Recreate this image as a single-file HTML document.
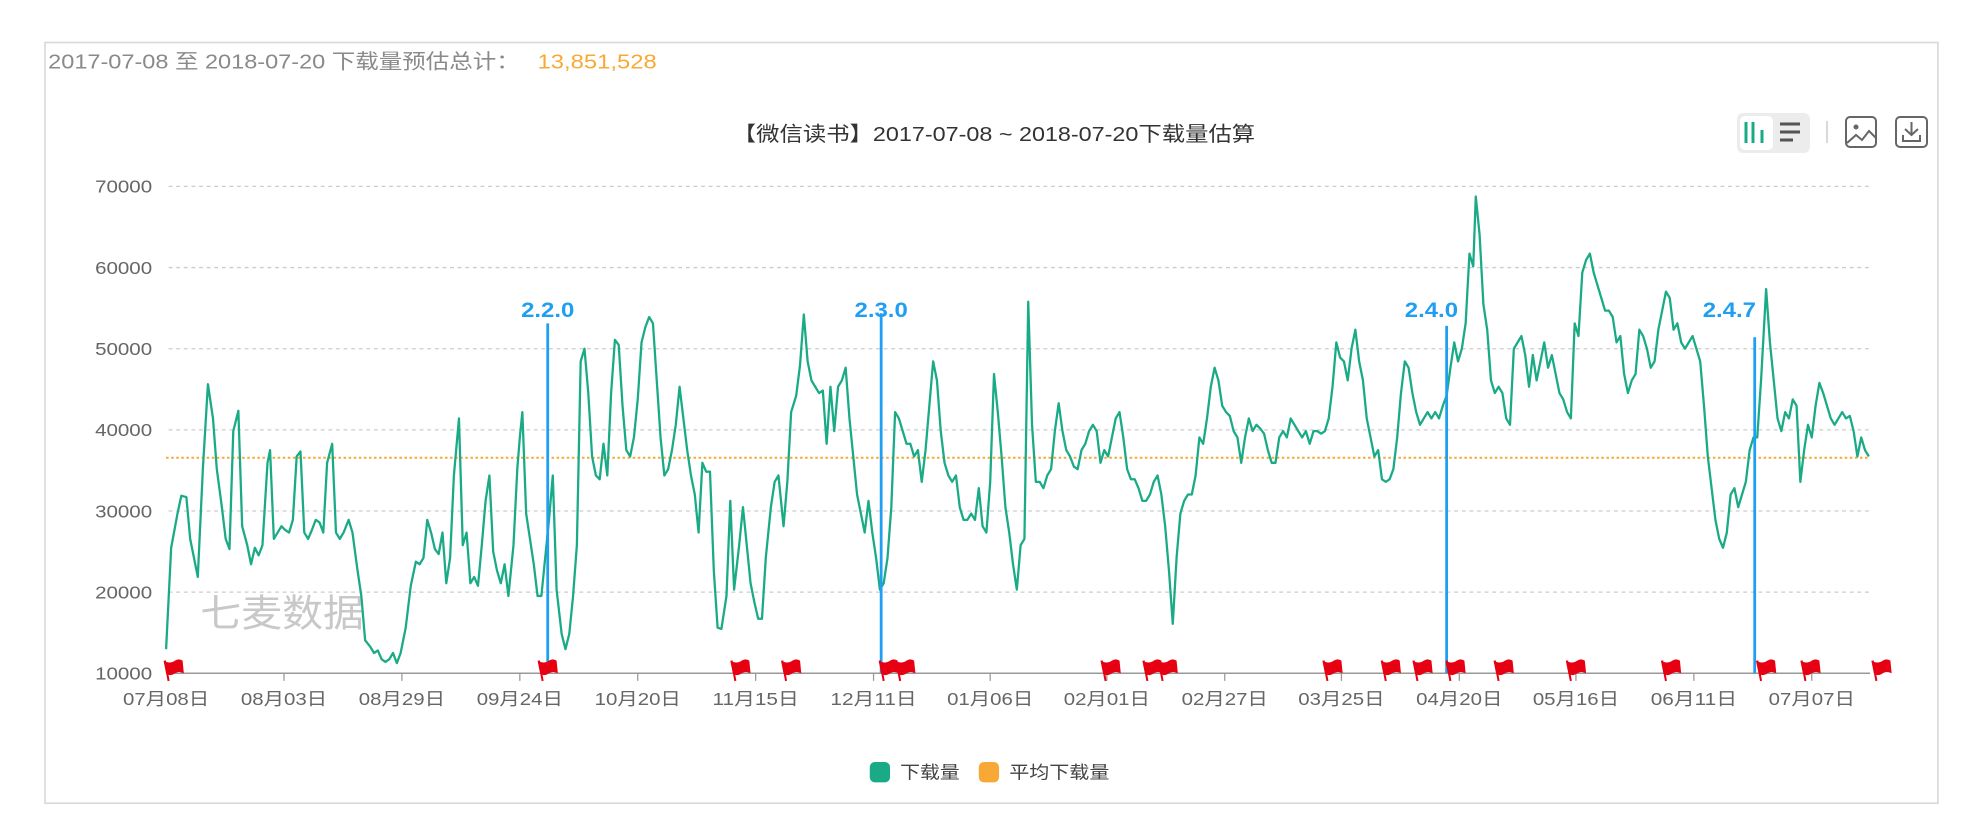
<!DOCTYPE html>
<html><head><meta charset="utf-8"><style>
html,body{margin:0;padding:0;background:#fff;}
body{width:1988px;height:828px;position:relative;overflow:hidden;font-family:"Liberation Sans","Noto Sans CJK SC",sans-serif;}
svg{position:absolute;left:0;top:0;}
</style></head><body>
<svg width="1988" height="828" viewBox="0 0 1568 653" xmlns="http://www.w3.org/2000/svg" font-family="Liberation Sans, Noto Sans CJK SC, sans-serif">
<rect x="35.5" y="33.5" width="1493" height="600" fill="#fff" stroke="#d9d9d9" stroke-width="1.3"/>
<text x="38" y="54" font-size="16" fill="#8a8a8a" textLength="372" lengthAdjust="spacingAndGlyphs">2017-07-08 至 2018-07-20 下载量预估总计：</text>
<text x="424" y="54" font-size="16" fill="#f8a935" textLength="94" lengthAdjust="spacingAndGlyphs">13,851,528</text>
<text x="578" y="111" font-size="16" fill="#333" textLength="412" lengthAdjust="spacingAndGlyphs">【微信读书】2017-07-08 ~ 2018-07-20下载量估算</text>
<g stroke="#ccc" stroke-width="1" stroke-dasharray="3,3">
<line x1="133" y1="147" x2="1475" y2="147"/><line x1="133" y1="211" x2="1475" y2="211"/>
<line x1="133" y1="275" x2="1475" y2="275"/><line x1="133" y1="339" x2="1475" y2="339"/>
<line x1="133" y1="403" x2="1475" y2="403"/><line x1="133" y1="467" x2="1475" y2="467"/>
</g>
<line x1="131" y1="531" x2="1475" y2="531" stroke="#999" stroke-width="1.2"/>
<g font-size="14" fill="#666">
<text x="75" y="152" textLength="45" lengthAdjust="spacingAndGlyphs">70000</text><text x="75" y="216" textLength="45" lengthAdjust="spacingAndGlyphs">60000</text><text x="75" y="280" textLength="45" lengthAdjust="spacingAndGlyphs">50000</text>
<text x="75" y="344" textLength="45" lengthAdjust="spacingAndGlyphs">40000</text><text x="75" y="408" textLength="45" lengthAdjust="spacingAndGlyphs">30000</text><text x="75" y="472" textLength="45" lengthAdjust="spacingAndGlyphs">20000</text><text x="75" y="536" textLength="45" lengthAdjust="spacingAndGlyphs">10000</text>
</g>
<g stroke="#999" stroke-width="1">
<line x1="224" y1="531" x2="224" y2="537"/><line x1="317" y1="531" x2="317" y2="537"/><line x1="410" y1="531" x2="410" y2="537"/><line x1="503" y1="531" x2="503" y2="537"/><line x1="596" y1="531" x2="596" y2="537"/><line x1="689" y1="531" x2="689" y2="537"/><line x1="781" y1="531" x2="781" y2="537"/><line x1="873" y1="531" x2="873" y2="537"/><line x1="966" y1="531" x2="966" y2="537"/><line x1="1058" y1="531" x2="1058" y2="537"/><line x1="1151" y1="531" x2="1151" y2="537"/><line x1="1243" y1="531" x2="1243" y2="537"/><line x1="1336" y1="531" x2="1336" y2="537"/><line x1="1429" y1="531" x2="1429" y2="537"/>
</g>
<g font-size="14" fill="#666">
<text x="97" y="556" textLength="68" lengthAdjust="spacingAndGlyphs">07月08日</text><text x="190" y="556" textLength="68" lengthAdjust="spacingAndGlyphs">08月03日</text><text x="283" y="556" textLength="68" lengthAdjust="spacingAndGlyphs">08月29日</text><text x="376" y="556" textLength="68" lengthAdjust="spacingAndGlyphs">09月24日</text><text x="469" y="556" textLength="68" lengthAdjust="spacingAndGlyphs">10月20日</text><text x="562" y="556" textLength="68" lengthAdjust="spacingAndGlyphs">11月15日</text><text x="655" y="556" textLength="68" lengthAdjust="spacingAndGlyphs">12月11日</text><text x="747" y="556" textLength="68" lengthAdjust="spacingAndGlyphs">01月06日</text><text x="839" y="556" textLength="68" lengthAdjust="spacingAndGlyphs">02月01日</text><text x="932" y="556" textLength="68" lengthAdjust="spacingAndGlyphs">02月27日</text><text x="1024" y="556" textLength="68" lengthAdjust="spacingAndGlyphs">03月25日</text><text x="1117" y="556" textLength="68" lengthAdjust="spacingAndGlyphs">04月20日</text><text x="1209" y="556" textLength="68" lengthAdjust="spacingAndGlyphs">05月16日</text><text x="1302" y="556" textLength="68" lengthAdjust="spacingAndGlyphs">06月11日</text><text x="1395" y="556" textLength="68" lengthAdjust="spacingAndGlyphs">07月07日</text>
</g>
<text x="158" y="494" font-size="30" fill="#c8c8c8" textLength="129" lengthAdjust="spacingAndGlyphs">七麦数据</text>
<line x1="131" y1="361" x2="1475" y2="361" stroke="#f8a935" stroke-width="1.5" stroke-dasharray="2,2"/>
<polyline fill="none" stroke="#1aab86" stroke-width="1.8" stroke-linejoin="round" points="131,512 135,432 140,405 143,391 147,392 150,425 153,440 156,455 160,370 164,303 168,330 171,370 175,400 178,425 181,433 184,340 188,324 191,415 195,430 198,445 201,432 204,438 207,430 211,365 213,355 216,425 219,420 222,415 225,418 228,420 231,410 234,360 237,356 240,420 243,425 246,418 249,410 252,412 255,420 258,365 262,350 265,420 268,425 271,420 275,410 278,420 282,450 285,470 288,505 292,510 295,515 298,513 301,520 304,522 307,520 310,515 313,523 316,515 320,495 324,462 328,443 331,445 334,440 337,410 340,420 343,433 346,437 349,420 352,460 355,440 358,375 362,330 365,430 368,420 371,460 374,455 377,462 380,430 383,395 386,375 389,435 392,450 395,460 398,445 401,470 405,430 408,370 410,345 412,325 415,405 418,425 421,445 424,470 427,470 430,440 433,410 436,375 439,465 443,500 446,512 449,500 452,470 455,430 458,285 461,275 464,310 467,360 470,375 473,378 476,350 479,375 482,310 485,268 488,272 491,320 494,355 497,360 500,345 503,315 506,270 509,258 512,250 515,255 518,300 521,345 524,375 527,370 530,355 533,335 536,305 539,330 542,355 545,375 548,390 551,420 554,365 557,372 560,372 563,450 566,495 569,496 573,470 576,395 579,465 583,430 586,400 589,430 592,460 595,475 598,488 601,488 604,440 608,400 611,380 614,375 618,415 621,380 624,325 628,312 631,288 634,248 637,285 640,300 643,305 646,310 649,308 652,350 655,305 658,340 661,305 664,300 667,290 670,330 673,360 676,390 679,405 682,420 685,395 688,420 691,440 694,465 697,460 700,440 703,400 706,325 709,330 712,340 715,350 718,350 721,360 724,355 727,380 730,355 733,320 736,285 739,300 742,340 745,365 748,375 751,380 754,375 757,400 760,410 763,410 766,405 769,410 772,385 775,415 778,420 781,380 784,295 787,325 790,360 793,400 796,420 799,445 802,465 805,430 808,425 811,238 814,335 817,380 820,380 823,385 826,375 829,370 832,340 835,318 838,340 841,355 844,360 847,368 850,370 853,355 856,350 859,340 862,335 865,340 868,365 871,355 874,360 877,345 880,330 883,325 886,345 889,370 892,378 895,378 898,385 901,395 904,395 907,390 910,380 913,375 916,390 919,415 922,450 925,492 928,440 931,405 934,395 937,390 940,390 943,375 946,345 949,350 952,330 955,305 958,290 961,300 964,320 967,325 970,328 973,340 976,345 979,365 982,345 985,330 988,340 991,335 994,338 997,342 1000,355 1003,365 1006,365 1009,345 1012,340 1015,345 1018,330 1021,335 1024,340 1027,345 1030,340 1033,350 1036,340 1039,340 1042,342 1045,340 1048,330 1051,305 1054,270 1057,282 1060,285 1063,300 1066,275 1069,260 1072,285 1075,300 1078,330 1081,345 1084,360 1087,355 1090,378 1093,380 1096,378 1099,370 1102,345 1105,310 1108,285 1111,290 1114,310 1117,325 1120,335 1123,330 1126,325 1129,330 1132,325 1135,330 1138,320 1141,312 1144,290 1147,270 1150,285 1153,275 1156,255 1159,200 1162,210 1164,155 1167,185 1170,240 1173,260 1176,300 1179,310 1182,305 1185,310 1188,330 1191,335 1194,275 1197,270 1200,265 1203,280 1206,305 1209,280 1212,300 1215,285 1218,270 1221,290 1224,280 1227,295 1230,310 1233,315 1236,325 1239,330 1242,255 1245,265 1248,215 1251,205 1254,200 1257,215 1260,225 1263,235 1266,245 1269,245 1272,250 1275,270 1278,265 1281,295 1284,310 1287,300 1290,295 1293,260 1296,265 1299,275 1302,290 1305,285 1308,260 1311,245 1314,230 1317,235 1320,260 1323,255 1326,270 1329,275 1332,270 1335,265 1338,275 1341,285 1344,320 1347,360 1350,385 1353,410 1356,425 1359,432 1362,420 1365,390 1368,385 1371,400 1374,390 1377,380 1380,355 1383,345 1386,345 1389,300 1393,228 1396,270 1399,300 1402,330 1405,340 1408,325 1411,330 1414,315 1417,320 1420,380 1423,355 1426,335 1429,345 1432,320 1435,302 1438,310 1441,320 1444,330 1447,335 1450,330 1453,325 1456,330 1459,328 1462,340 1465,360 1468,345 1471,355 1474,360"/>
<g stroke="#1e9ff2" stroke-width="2.2">
<line x1="432" y1="255" x2="432" y2="531"/><line x1="695" y1="247" x2="695" y2="531"/>
<line x1="1141" y1="257" x2="1141" y2="531"/><line x1="1384" y1="266" x2="1384" y2="531"/>
</g>
<g font-size="17" font-weight="bold" fill="#1e9ff2">
<text x="411" y="250" textLength="42" lengthAdjust="spacingAndGlyphs">2.2.0</text><text x="674" y="250" textLength="42" lengthAdjust="spacingAndGlyphs">2.3.0</text><text x="1108" y="250" textLength="42" lengthAdjust="spacingAndGlyphs">2.4.0</text><text x="1343" y="250" textLength="42" lengthAdjust="spacingAndGlyphs">2.4.7</text>
</g>
<defs><g id="f"><line x1="0" y1="10" x2="-3" y2="-6" stroke="#e60012" stroke-width="1.6"/><path d="M-4,-6 Q1,-3 5,-6 Q8,-8 11,-6 L12,4 Q8,2 5,4 Q1,7 -2,4 Z" fill="#e60012"/></g></defs>
<g>
<use href="#f" x="133" y="527"/><use href="#f" x="428" y="527"/><use href="#f" x="580" y="527"/><use href="#f" x="620" y="527"/><use href="#f" x="697" y="527"/><use href="#f" x="710" y="527"/><use href="#f" x="872" y="527"/><use href="#f" x="905" y="527"/><use href="#f" x="917" y="527"/><use href="#f" x="1047" y="527"/><use href="#f" x="1093" y="527"/><use href="#f" x="1118" y="527"/><use href="#f" x="1144" y="527"/><use href="#f" x="1182" y="527"/><use href="#f" x="1239" y="527"/><use href="#f" x="1314" y="527"/><use href="#f" x="1389" y="527"/><use href="#f" x="1424" y="527"/><use href="#f" x="1480" y="527"/>
</g>
<rect x="686" y="601" width="16" height="16" rx="4" fill="#1aab86"/>
<text x="710" y="614" font-size="14" fill="#444" textLength="47" lengthAdjust="spacingAndGlyphs">下载量</text>
<rect x="772" y="601" width="16" height="16" rx="4" fill="#f8a935"/>
<text x="796" y="614" font-size="14" fill="#444" textLength="79" lengthAdjust="spacingAndGlyphs">平均下载量</text>
</svg>
<svg width="1988" height="828" viewBox="0 0 1988 828" xmlns="http://www.w3.org/2000/svg">
<rect x="1737" y="113" width="73" height="40" rx="6" fill="#ececec"/>
<rect x="1740" y="116" width="33" height="34" rx="5" fill="#fff"/>
<g stroke="#1aab86" stroke-width="3"><line x1="1746" y1="122" x2="1746" y2="143"/><line x1="1753" y1="122" x2="1753" y2="143"/><line x1="1762" y1="130" x2="1762" y2="143"/></g>
<g stroke="#555" stroke-width="3"><line x1="1780" y1="124" x2="1800" y2="124"/><line x1="1780" y1="132" x2="1800" y2="132"/><line x1="1780" y1="140" x2="1793" y2="140"/></g>
<line x1="1827" y1="121" x2="1827" y2="143" stroke="#ccc" stroke-width="1.5"/>
<rect x="1846" y="117" width="30" height="30" rx="4" fill="none" stroke="#666" stroke-width="2"/>
<circle cx="1856" cy="127" r="2.5" fill="#666"/>
<path d="M1847,143 L1856,135 L1862,140 L1869,131 L1876,138" fill="none" stroke="#666" stroke-width="2"/>
<rect x="1896" y="117" width="31" height="30" rx="4" fill="none" stroke="#666" stroke-width="2"/>
<path d="M1911.5,122 V135 M1905,129 L1911.5,135 L1918,129 M1903,135 V141 H1920 V135" fill="none" stroke="#666" stroke-width="2"/>
</svg>
</body></html>
